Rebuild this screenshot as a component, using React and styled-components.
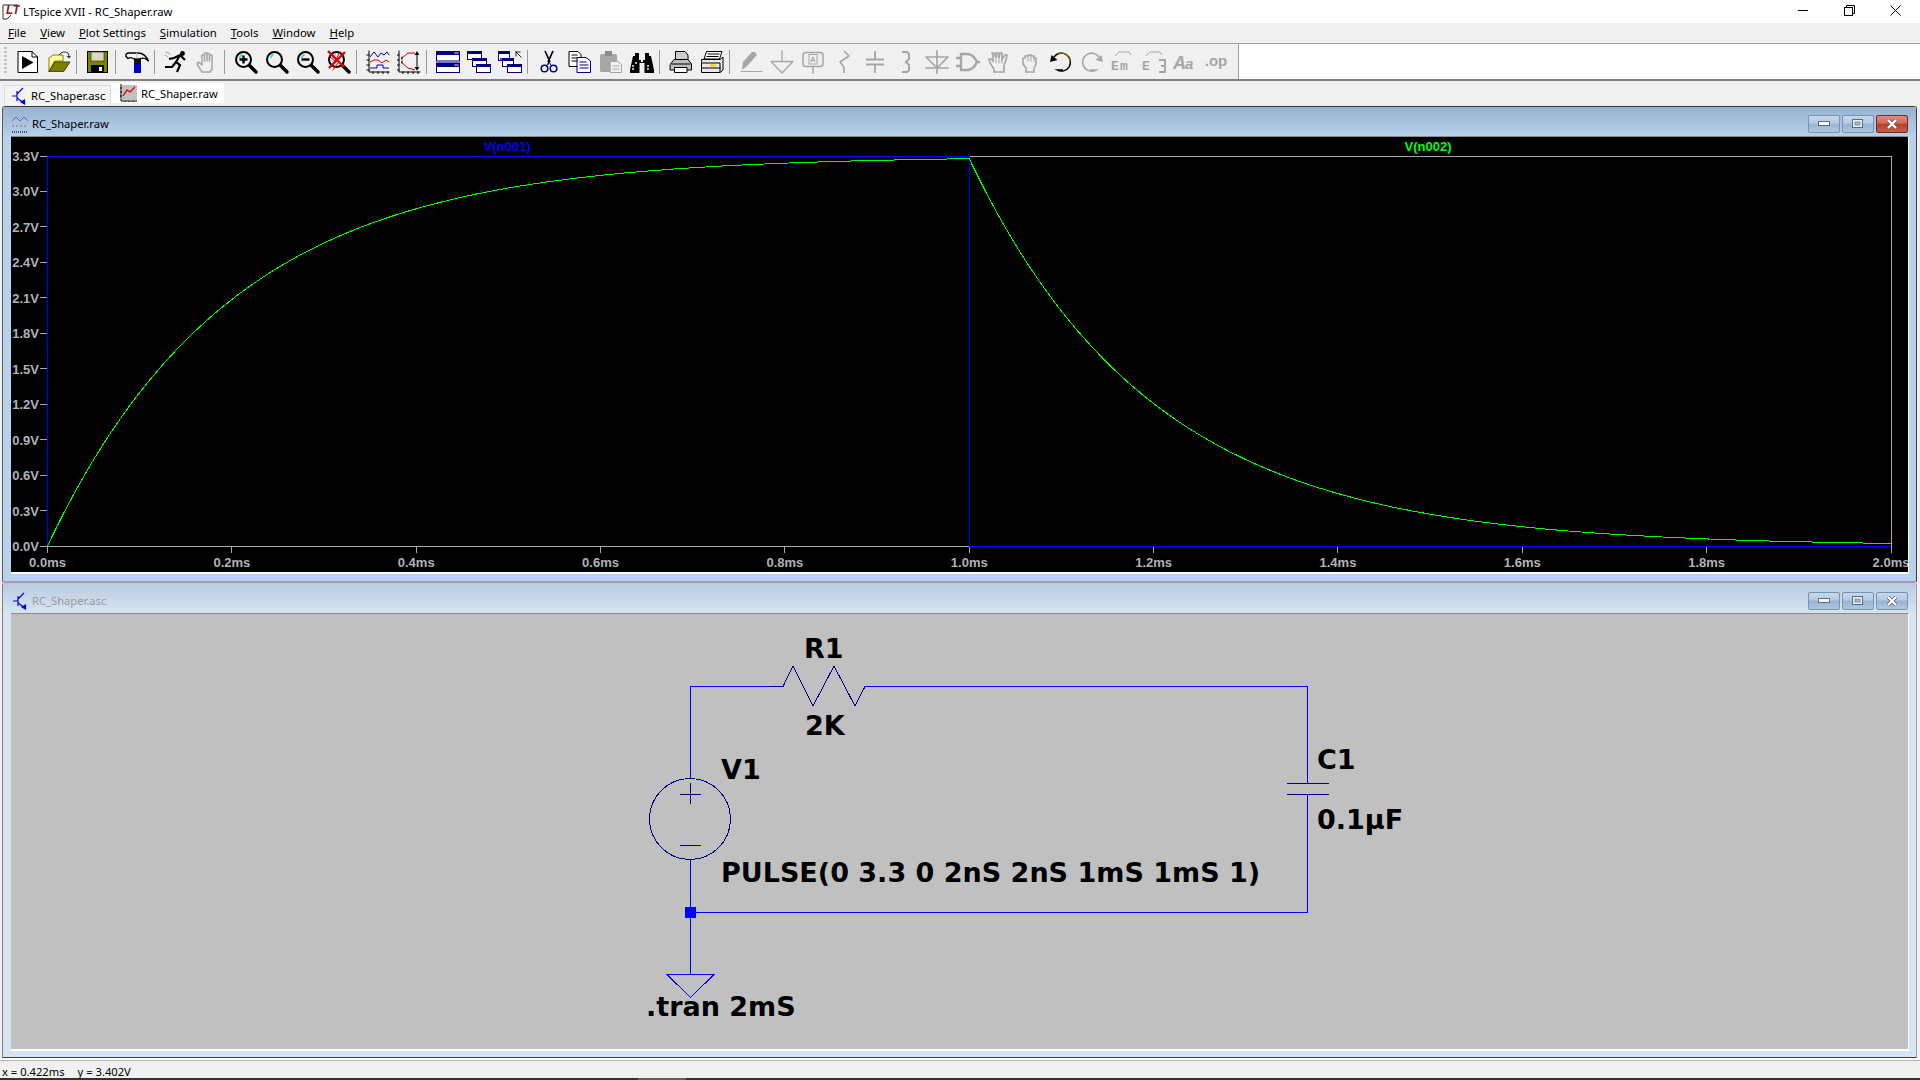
import React from 'react';
import styled, { createGlobalStyle } from 'styled-components';

const GlobalStyle = createGlobalStyle`
  html, body { margin: 0; padding: 0; overflow: hidden; background: #f0f0f0; }
  * { box-sizing: border-box; }
`;

const UI_FONT = '"Liberation Sans", Arial, sans-serif';
const G = '#a6a6a6';
const NAVY = '#000080';

const Root = styled.div`
  width: 1920px; height: 1080px; display: flex; flex-direction: column; overflow: hidden;
  background: #f0f0f0; font-family: "Noto Sans", ${UI_FONT}; font-size: 11.2px; color: #000;
`;
const TitleBar = styled.div`
  height: 23px; background: #fff; display: flex; align-items: center; padding: 0 2px 0 2px; flex: none;
`;
const TitleText = styled.span`margin-left: 3px; font-size: 11.3px;`;
const WinControls = styled.div`margin-left: auto; display: flex; height: 100%;`;
const WinControl = styled.div`width: 46px; display: flex; align-items: center; justify-content: center; padding-bottom: 3px;`;
const MenuBar = styled.div`
  height: 21px; flex: none; background: #f0f0f0; border-bottom: 1px solid #a0a0a0;
  display: flex; align-items: center; gap: 14px; padding: 0 0 2px 8px; font-size: 11.35px;
`;
const MenuItem = styled.span`
  u { text-underline-offset: 1px; }
`;
const ToolRow = styled.div`display: flex; height: 37px; flex: none; background: #fff; border-bottom: 2px solid #808080;`;
const Toolbar = styled.div`
  width: 1239px; background: #f0f0f0; border-right: 1px solid #a0a0a0; display: flex; align-items: center;
  padding-left: 12px; position: relative;
`;
const Gripper = styled.div`
  position: absolute; left: 4px; top: 3px; bottom: 4px; width: 3px;
  background: repeating-linear-gradient(to bottom, #c4c4c4 0 2px, transparent 2px 4px);
`;
const ToolSlot = styled.div`width: 31px; height: 24px; flex: none; display: flex; justify-content: center; svg { display: block; }`;
const ToolSep = styled.div`width: 1px; height: 24px; margin: 0 5px 0 2px; background: #9a9a9a; flex: none;`;
const TabStrip = styled.div`height: 25px; flex: none; display: flex; padding-left: 4px; background: #f0f0f0; position: relative;`;
const Tab = styled.div`
  display: flex; align-items: center; gap: ${p => (p.$active ? 4 : 5)}px; font-size: 11.2px; height: 20px;
  margin-top: ${p => (p.$active ? 2 : 4)}px; width: ${p => (p.$active ? 113 : 107)}px;
  padding-left: ${p => (p.$active ? 8 : 7)}px; padding-bottom: ${p => (p.$active ? 1 : 0)}px;
  background: ${p => (p.$active ? '#fff' : '#f3f3f3')};
  border: 1px solid ${p => (p.$active ? '#fff' : '#dcdcdc')};
  border-bottom: none;
`;
const Mdi = styled.div`display: flex; flex-direction: column; margin: 0 3px 0 2px; flex: none;`;
const Window = styled.div`
  height: 476px; display: flex; flex-direction: column; flex: none; border-radius: 3px 3px 0 0;
  background: ${p => (p.$active ? '#b9d1ea' : '#d7e4f2')};
  border-style: solid; border-width: 1px;
  border-color: ${p => (p.$active ? '#3c3c3c #3c3c3c #35c8e6 #5a5a5a' : '#a0a0a0 #a0a0a0 #444 #808080')};
`;
const WindowTitle = styled.div`
  height: ${p => (p.$active ? 29 : 30)}px; flex: none; display: flex; align-items: center;
  padding: ${p => (p.$active ? 4 : 5)}px 8px 0 8px; gap: 4px; font-size: 11.2px;
  color: ${p => (p.$active ? '#000' : '#9a9a9a')};
  background: ${p => (p.$active ? 'linear-gradient(#98b1cf, #b7d0ea)' : 'linear-gradient(#b9cbde, #d6e4f2)')};
`;
const TitleIcon = styled.span`width: 17px; height: 18px; display: flex; justify-content: center; flex: none;`;
const WindowButtons = styled.div`margin-left: auto; display: flex; gap: 2px;`;
const WindowButton = styled.div`
  width: 32px; height: 18px; border-radius: 2px; display: flex; align-items: center; justify-content: center;
  border: 1px solid ${p => (p.$close ? '#6a2a30' : '#7c90ac')};
  background: ${p => (p.$close
    ? 'linear-gradient(#e08a7c 0, #d06a58 45%, #b83c28 50%, #c8604a 100%)'
    : 'linear-gradient(#c4d8ee 0, #b4cbe4 45%, #98b3d0 50%, #acc8e4 100%)')};
`;
const PlotFrame = styled.div`
  margin: 0 7px 7px 8px; flex: 1; border-top: 1px solid #8a8a8a; border-right: 1px solid #fff; border-bottom: 2px solid #fff;
  svg { display: block; }
`;
const CanvasFrame = styled.div`
  margin: 0 7px 6px 8px; flex: 1; border-top: 1px solid #8a8a8a; border-right: 1px solid #fff; border-bottom: 2px solid #fff;
  svg { display: block; }
`;
const Gap = styled.div`height: 2px; flex: none; background: #fafafa;`;
const StatusBar = styled.div`
  height: 18px; flex: none; border-top: 1px solid #b4b4b4; background: #f0f0f0; display: flex; align-items: center;
  padding: 3px 0 0 2px; font-size: 11.2px; gap: 13px; white-space: pre;
`;
const Sliver = styled.div`
  height: 2px; flex: none; background: linear-gradient(to right, #333 638px, #5c5c5c 638px, #5c5c5c 686px, #333 686px);
`;
const PlotSvg = styled.svg`
  background: #000;
  text { font-family: ${UI_FONT}; font-weight: 700; font-size: 13px; fill: #b0b2b6; }
`;
const TraceLabel = styled.text`
  && { fill: ${p => p.$color}; }
`;
const SchematicSvg = styled.svg`
  background: #c0c0c0;
  text { font-family: "DejaVu Sans", ${UI_FONT}; font-weight: 700; font-size: 27px; fill: #000; }
`;

const S = ({ children, ...p }) => (
  <svg width="24" height="24" viewBox="0 0 24 24" fill="none" strokeLinecap="square" {...p}>{children}</svg>
);
const Lens = ({ children }) => (
  <S>
    <path d="M15 15L22 22" stroke="#000" strokeWidth="3.4" strokeLinecap="round" />
    <circle cx="9.5" cy="9.5" r="7.5" fill="#f0f0f0" stroke="#000" strokeWidth="2" />
    <path d="M5.5 8Q6 5.5 8.5 4.5" stroke="#2fd6d6" strokeWidth="1.6" strokeLinecap="butt" />
    {children}
  </S>
);
const MiniWin = ({ x, y, w, h }) => (
  <g>
    <rect x={x + .5} y={y + .5} width={w} height={h} fill="#fff" stroke={NAVY} />
    <rect x={x} y={y} width={w + 1} height="3" fill={NAVY} />
  </g>
);
const GlowHand = ({ open }) => (
  <S>
    <path
      d={open
        ? 'M7 22V19L3 13 2 9 4 9 6 11V6L5 3H7L9 8V3H11L12 8 13 3H15L15 9 18 5H20L19 10 17 15 17 19V22Z'
        : 'M8 22V18L5 14V8H7V6H10V5H13V6H16V8H18V14L16 18V22Z'}
      fill="#f0f0f0" stroke={G} strokeWidth="1.6"
    />
    <path d={open ? 'M9 9V13M12 8V13M15 9V13' : 'M10 6V11M13 6V11M16 8V11'} stroke={G} />
  </S>
);
const IconLetter = ({ x, children }) => (
  <text x={x} y="20" fontSize="13" fontWeight="700" fontFamily="Liberation Mono" fill={G}>{children}</text>
);

const Icons = {
  run: <S><path d="M2.5 1.5H16L21.5 7V22.5H2.5Z" fill="#fff" stroke="#000" /><path d="M16 1.5V7H21.5" stroke="#000" /><path d="M6 6L17.5 12.5L6 19Z" fill="#000" /></S>,
  open: <S><path d="M2 21V8L6 5H16V11H8Z" fill="#ffff9a" stroke="#808000" /><path d="M2 21L8 12H23L17 21Z" fill="#808000" stroke="#404000" /><path d="M12 5Q16 0 21 3L22 6" stroke="#333" strokeLinecap="butt" /><path d="M19.5 6H24L22 8.5Z" fill="#333" /></S>,
  save: <S><rect x="1.5" y="1.5" width="20" height="21" fill="#808000" stroke="#000" /><rect x="5" y="2" width="13" height="9" fill="#d8d8c8" stroke="#404000" strokeWidth=".7"/><rect x="5" y="15" width="13" height="7" fill="#000" /><rect x="13" y="17" width="3" height="4" fill="#fff" /></S>,
  hammer: <S><path d="M.7 6Q1 3 4 3H13Q20 3 23.5 11L20 8.5Q17 7.5 15 9H9Q6 6.5 3 8.5Z" fill="#f4f4f4" stroke="#000" strokeWidth="1.3" strokeLinejoin="round" /><rect x="9" y="9" width="7" height="6" fill="#111" /><rect x="9" y="14" width="7" height="9" fill="#0000c8" /><path d="M12 3V8" stroke="#bbb" /></S>,
  run2: <S><circle cx="18.5" cy="3.5" r="2.4" fill="#000" /><path d="M5 9L10 8 16 5 12 12 16 15 13 22M12 12L8 17 1 17M16 5 21 10" stroke="#000" strokeWidth="2.2" strokeLinecap="butt" /><path d="M2 2L6 4M1 5L4 7" stroke="#a0a0a0" /></S>,
  hand: <S><path d="M7 22L2 14 3.5 12 7 15V5H9.5V11 3H12V11 3.5H14.5V11 5H17V15 19L15 22Z" fill="#f0f0f0" stroke={G} strokeWidth="1.5" strokeLinejoin="round" /></S>,
  zoomIn: <Lens><path d="M5.5 9.5H13.5M9.5 5.5V13.5" stroke="#000" strokeWidth="2.4" strokeLinecap="butt" /></Lens>,
  zoom: <Lens />,
  zoomOut: <Lens><path d="M5.5 9.5H13.5" stroke="#000" strokeWidth="2.4" strokeLinecap="butt" /></Lens>,
  zoomX: <Lens><path d="M1 1L17 17M18 2L2 18" stroke="#e00000" strokeWidth="2.4" strokeLinecap="butt" /><path d="M6 20L11 13M13 2L8 11 3 7" stroke="#e00000" /></Lens>,
  waves: <S><path d="M3 1V22H23" stroke="#000" /><path d="M1 5H3M1 10H3M1 15H3M1 20H3M7 22V24M12 22V24M17 22V24M22 22V24" stroke="#000" /><path d="M4 7L8 2 12 7 15 3 18 5 21 2 23 5" stroke="#0000c8" strokeLinecap="butt" /><path d="M4 12L8 10H12L16 13 20 10 23 12" stroke="#e00000" strokeLinecap="butt" /><path d="M4 18H11V15H17V18H23" stroke="#0000c8" strokeLinecap="butt" /></S>,
  fft: <S><path d="M2 1V22H23" stroke="#000" /><path d="M0 5H2M0 10H2M0 15H2M0 20H2M6 22V24M11 22V24M16 22V24M21 22V24" stroke="#000" /><path d="M4 9L11 3H18M4 12L11 18 18 20" stroke="#d00000" strokeLinecap="butt" /><path d="M20 2V19" stroke="#000" /><path d="M17.5 5L20 1.5 22.5 5ZM17.5 17L20 20.5 22.5 17Z" fill="#000" /><path d="M5 7V15" stroke="#000" strokeDasharray="2 2" /></S>,
  tile: <S><rect x=".5" y="1.5" width="23" height="9.5" fill="#fff" stroke={NAVY} /><rect x="0" y="1" width="24" height="4" fill={NAVY} /><rect x=".5" y="13" width="23" height="9.5" fill="#fff" stroke={NAVY} /><rect x="0" y="13" width="24" height="4" fill={NAVY} /><path d="M19 3H20M21 3H22M19 15H20M21 15H22" stroke="#fff" /></S>,
  cascade: <S><MiniWin x={0} y={1} w={14} h={8} /><MiniWin x={5} y={8} w={14} h={8} /><MiniWin x={9} y={14} w={14} h={8} /></S>,
  arrange: <S><MiniWin x={0} y={1} w={11} h={9} /><MiniWin x={4} y={8} w={11} h={8} /><MiniWin x={9} y={14} w={14} h={8} /><path d="M18 2H22M18 2V6M18 2L23 7" stroke="#222" /><rect x="2" y="8" width="2" height="2" fill="#d000d0" /></S>,
  cut: <S><path d="M8 1L13 12M16 1L11 12" stroke="#000" strokeWidth="1.7" strokeLinecap="butt" /><path d="M11.5 11V14" stroke="#000" /><circle cx="7.5" cy="18.5" r="3.3" stroke={NAVY} strokeWidth="1.5" /><circle cx="16.5" cy="18.5" r="3.3" stroke={NAVY} strokeWidth="1.5" /><path d="M10 15L12 12 14 15" stroke={NAVY} /></S>,
  copy: <S><path d="M1.5 1.5H10L13 4.5V16.5H1.5Z" fill="#fff" stroke="#000" /><path d="M4 5H9M4 8H10M4 11H10" stroke="#000" /><path d="M9.5 7.5H18L22.5 11V22.5H9.5Z" fill="#fff" stroke={NAVY} /><path d="M12 12H18M12 15H20M12 18H20" stroke={NAVY} /></S>,
  paste: <S><rect x="1" y="4" width="17" height="18" rx="1.5" fill={G} /><rect x="6" y="1" width="7" height="5" fill="#8a8a8a" /><path d="M11.5 11.5H19L22.5 14.5V22.5H11.5Z" fill="#f0f0f0" stroke={G} /><path d="M14 16H20M14 19H20" stroke={G} /></S>,
  binoc: <S><path d="M3 6H9V10H15V6H21L24 20V23H14.5V13H9.5V23H0V20Z" fill="#000" /><path d="M5 3H9V6H5ZM15 3H19V6H15Z" fill="#000" /><path d="M3 15V20M6 12V14M18 15V20" stroke="#fff" strokeWidth="1.4" strokeLinecap="butt" strokeDasharray="2 1" /><path d="M11 10H13V12H11Z" fill="#fff" /></S>,
  print: <S><path d="M7 1.5H16L19 5V11H7Z" fill="#ccc" stroke="#000" /><path d="M1.5 14L5 9.5H19L22.5 14V20H1.5Z" fill="#bdbdbd" stroke="#000" /><path d="M6 17.5H18V22.5H6Z" fill="#fff" stroke="#000" /><path d="M3 14H21" stroke="#000" /></S>,
  printer: <S><path d="M7 1.5H22L19.5 9H4.5Z" fill="#fff" stroke="#000" /><path d="M8 4H19M7 6.5H18" stroke="#000" /><path d="M2 9.5H20L23 7V20L20 22.5H1.5V12Z" fill="#e8e8e8" stroke="#000" /><path d="M2 13H20V22M2 18H20" stroke="#000" /><rect x="10" y="14.5" width="6" height="2" fill="#f0d000" /></S>,
  pencil: <S><path d="M3 20L4 12 13 2H16L18 5 8 16Z" fill={G} /><path d="M2 21.5H23" stroke={G} /></S>,
  ground: <S><path d="M12 1V11M1 11.5H23L12 23Z" stroke={G} strokeWidth="1.3" strokeLinejoin="round" /></S>,
  label: <S><rect x="2" y="2.5" width="20" height="14" rx="3" stroke={G} strokeWidth="1.5" /><rect x="8" y="4.5" width="8" height="9.5" stroke={G} /><text x="12" y="12" textAnchor="middle" fontSize="8" fontWeight="700" fontFamily="Liberation Mono" fill={G}>A</text><path d="M12 17V23" stroke={G} strokeWidth="1.5" /></S>,
  res: <S><path d="M12 1L17 6 8 12 12 17 12 23" stroke={G} strokeWidth="1.7" strokeLinecap="butt" strokeLinejoin="bevel" /></S>,
  cap: <S><path d="M12 1V9M12 15V23M3 9.5H21M3 14.5H21" stroke={G} strokeWidth="1.8" strokeLinecap="butt" /></S>,
  ind: <S><path d="M8 2H13L15 4V9L12 12 15 15V20L13 22H8" stroke={G} strokeWidth="2" strokeLinecap="butt" /></S>,
  diode: <S><path d="M12 1V23M1 7H23L12 18ZM1 18H23" stroke={G} strokeWidth="1.7" strokeLinejoin="round" /></S>,
  gate: <S><path d="M5 4H12Q18 5 21 12 18 19 12 20H5ZM0 8H5M0 16H5M21 12H24" stroke={G} strokeWidth="2.4" strokeLinecap="butt" /></S>,
  handOpen: <GlowHand open />,
  handFist: <GlowHand />,
  undo: <S><path d="M5 7A9 9 0 1 1 8 20H14" stroke="#000" strokeWidth="1.4" strokeLinecap="butt" /><path d="M9 3.5A9 9 0 0 1 21 11" stroke="#807000" strokeWidth="1.4" strokeLinecap="butt" /><path d="M1 12L2.5 5 8.5 10Z" fill="#000" /></S>,
  redo: <S transform="scale(-1 1)"><path d="M5 7A9 9 0 1 1 8 20H14" stroke={G} strokeWidth="1.6" strokeLinecap="butt" /><path d="M1 12L2.5 5 8.5 10Z" fill={G} /></S>,
  moveEm: <S><path d="M4 6L8 2H18L20 5" stroke={G} strokeLinecap="butt" /><IconLetter x={0}>E</IconLetter><IconLetter x={9}>m</IconLetter></S>,
  dragE: <S><path d="M4 6L8 2H18L20 5" stroke={G} strokeLinecap="butt" /><IconLetter x={0}>E</IconLetter><path d="M17 10H23V22H17M19 16H23" stroke={G} strokeWidth="1.8" strokeLinecap="butt" /></S>,
  text: <S><text x="0" y="19" fontSize="18" fontStyle="italic" fontWeight="700" fontFamily="Liberation Sans" fill={G}>A</text><text x="12" y="19" fontSize="15" fontStyle="italic" fontWeight="700" fontFamily="Liberation Sans" fill={G}>a</text></S>,
  op: <S><text x="12" y="16" textAnchor="middle" fontSize="15" fontWeight="700" fontFamily="Liberation Sans" fill={G}>.op</text></S>,
};

const GROUPS = [
  ['run', 'open'], ['save'], ['hammer'], ['run2', 'hand'],
  ['zoomIn', 'zoom', 'zoomOut', 'zoomX'], ['waves', 'fft'], ['tile', 'cascade', 'arrange'],
  ['cut', 'copy', 'paste', 'binoc'], ['print', 'printer'],
  ['pencil', 'ground', 'label', 'res', 'cap', 'ind', 'diode', 'gate', 'handOpen', 'handFist', 'undo', 'redo', 'moveEm', 'dragE', 'text', 'op'],
];

const MENUS = ['File', 'View', 'Plot Settings', 'Simulation', 'Tools', 'Window', 'Help'];

const AppLogo = () => (
  <svg width="18" height="18" viewBox="0 0 18 18" fill="none">
    <path d="M1 2L1 16L5 16L9 12" stroke="#333" strokeWidth="1" />
    <path d="M1 2H16" stroke="#333" />
    <text x="4" y="11" fontSize="12" fontWeight="700" fontStyle="italic" fontFamily="Liberation Sans" fill="#8a1c1c">LT</text>
  </svg>
);
const TransistorIcon = () => (
  <svg width="14" height="18" viewBox="0 0 14 18" fill="none" stroke="#0000e0" strokeWidth="1.2">
    <path d="M0 9H5M5 4V14M11 1L5 7M5 11L12 16" /><path d="M9 15L12.5 17V13Z" fill="#0000e0" />
  </svg>
);
const PlotIconColor = () => (
  <svg width="17" height="18" viewBox="0 0 17 18" fill="none">
    <rect x="2" y="1" width="15" height="15" fill="#c0c0c0" />
    <path d="M1 0V17H17" stroke="#000" /><path d="M3 12L7 6 10 8 15 3" stroke="#e00000" strokeWidth="1.3" />
    <path d="M0 4H2M0 8H2M0 12H2M5 17V18M9 17V18M13 17V18" stroke="#000" />
  </svg>
);
const PlotIconMuted = () => (
  <svg width="17" height="18" viewBox="0 0 17 18" fill="none">
    <path d="M1 17H17" stroke="#555" strokeDasharray="1 1" strokeWidth="2" />
    <path d="M1 6L5 2 9 6 13 2 17 6" stroke="#5070a0" /><path d="M1 11H17" stroke="#b06060" strokeDasharray="2 2" />
  </svg>
);
const MinGlyph = () => <svg width="12" height="6"><rect x=".5" y=".5" width="11" height="4" fill="#fff" stroke="#5a6a80" /></svg>;
const MaxGlyph = () => <svg width="12" height="10"><rect x=".5" y=".5" width="10" height="8" fill="#e8eef5" stroke="#5a6a80" /><rect x="3" y="3" width="5" height="3" fill="#a8bcd4" stroke="#5a6a80" strokeWidth=".6" /></svg>;
const CloseGlyph = () => <svg width="12" height="10"><path d="M2 1L10 9M10 1L2 9" stroke="#5a5a5a" strokeWidth="3.6" /><path d="M2 1L10 9M10 1L2 9" stroke="#fff" strokeWidth="2.2" /></svg>;

const WindowChrome = ({ active, icon, title, children }) => (
  <Window $active={active}>
    <WindowTitle $active={active}>
      <TitleIcon>{icon}</TitleIcon><span>{title}</span>
      <WindowButtons>
        <WindowButton><MinGlyph /></WindowButton>
        <WindowButton><MaxGlyph /></WindowButton>
        <WindowButton $close={active}><CloseGlyph /></WindowButton>
      </WindowButtons>
    </WindowTitle>
    {children}
  </Window>
);

const X0 = 47.5, X1 = 1891, Y0 = 546, Y33 = 156;
const xOf = t => X0 + (X1 - X0) * t / 2;
const yOf = v => Y0 - (Y0 - Y33) * v / 3.3;
const greenPoints = (() => {
  const pts = [];
  const peak = 3.3 * (1 - Math.exp(-5));
  for (let t = 0; t <= 2.0001; t += 0.002) {
    const v = t <= 1 ? 3.3 * (1 - Math.exp(-t / 0.2)) : peak * Math.exp(-(t - 1) / 0.2);
    pts.push(`${xOf(t).toFixed(1)},${yOf(v).toFixed(1)}`);
  }
  return pts.join(' ');
})();

const Plot = () => (
  <PlotSvg width="1897" height="435" viewBox="11 137 1897 435">
    <g shapeRendering="crispEdges">
      <rect x={X0} y={Y33} width={X1 - X0} height={Y0 - Y33} fill="none" stroke="#a8a8a8" />
      {Array.from({ length: 12 }, (_, i) => <line key={i} x1="40" x2={X0} y1={yOf(i * 0.3)} y2={yOf(i * 0.3)} stroke="#a8a8a8" />)}
      {Array.from({ length: 11 }, (_, i) => <line key={i} x1={xOf(i * 0.2)} x2={xOf(i * 0.2)} y1={Y0} y2={Y0 + 7} stroke="#a8a8a8" />)}
      <polyline points={`${X0},${Y0} ${X0},${Y33} ${xOf(1)},${Y33} ${xOf(1)},${Y0} ${X1},${Y0}`} fill="none" stroke="#0000ff" />
      <polyline points={greenPoints} fill="none" stroke="#00ff00" />
    </g>
    {Array.from({ length: 12 }, (_, i) => <text key={i} x="39" y={yOf(i * 0.3) + 5} textAnchor="end">{(i * 0.3).toFixed(1)}V</text>)}
    {Array.from({ length: 11 }, (_, i) => <text key={i} x={xOf(i * 0.2)} y="567" textAnchor="middle">{(i * 0.2).toFixed(1)}ms</text>)}
    <TraceLabel x="507" y="151" textAnchor="middle" $color="#0000ff">V(n001)</TraceLabel>
    <TraceLabel x="1428" y="151" textAnchor="middle" $color="#00ff00">V(n002)</TraceLabel>
  </PlotSvg>
);

const Schematic = () => (
  <SchematicSvg width="1897" height="435" viewBox="11 614 1897 435">
    <g shapeRendering="crispEdges" fill="none">
      <path d="M773 686.5H690.5V778M690.5 860V974M690.5 912.5H1307.5V794M1307.5 783V686.5H865" stroke="#0000ff" />
      <path d="M773 686.5H783L793 666 813 706 834 666 855 706 865 686.5" stroke={NAVY} />
      <path d="M1287 783.5H1329M1287 794.5H1329" stroke={NAVY} />
      <circle cx="690" cy="819" r="40.5" stroke={NAVY} />
      <path d="M680 794.5H701M690.5 783V804M680 845.5H701" stroke={NAVY} />
      <path d="M667 974.5H714L690.5 997.5Z" stroke="#0000ff" />
      <rect x="685" y="907" width="11" height="11" fill="#0000ff" />
    </g>
    <text x="804" y="658">R1</text>
    <text x="805" y="735">2K</text>
    <text x="721" y="779">V1</text>
    <text x="1317" y="769">C1</text>
    <text x="1317" y="829">0.1µF</text>
    <text x="721" y="882">PULSE(0 3.3 0 2nS 2nS 1mS 1mS 1)</text>
    <text x="646" y="1016">.tran 2mS</text>
  </SchematicSvg>
);

export default function App() {
  return (
    <Root>
      <GlobalStyle />
      <TitleBar>
        <AppLogo />
        <TitleText>LTspice XVII - RC_Shaper.raw</TitleText>
        <WinControls>
          <WinControl><svg width="11" height="11"><path d="M0 5.5H10" stroke="#000" /></svg></WinControl>
          <WinControl><svg width="11" height="11" fill="none" stroke="#000"><rect x=".5" y="2.5" width="8" height="8" /><path d="M2.5 2.5V.5H10.5V8.5H8.5" /></svg></WinControl>
          <WinControl><svg width="11" height="11" stroke="#000"><path d="M.5 .5L10.5 10.5M10.5 .5L.5 10.5" /></svg></WinControl>
        </WinControls>
      </TitleBar>
      <MenuBar>
        {MENUS.map(m => <MenuItem key={m}><u>{m[0]}</u>{m.slice(1)}</MenuItem>)}
      </MenuBar>
      <ToolRow>
        <Toolbar>
          <Gripper />
          {GROUPS.map((g, i) => (
            <React.Fragment key={i}>
              {i > 0 && <ToolSep />}
              {g.map(n => <ToolSlot key={n}>{Icons[n]}</ToolSlot>)}
            </React.Fragment>
          ))}
        </Toolbar>
      </ToolRow>
      <TabStrip>
        <Tab><TransistorIcon />RC_Shaper.asc</Tab>
        <Tab $active><PlotIconColor />RC_Shaper.raw</Tab>
      </TabStrip>
      <Mdi>
        <WindowChrome active icon={<PlotIconMuted />} title="RC_Shaper.raw">
          <PlotFrame><Plot /></PlotFrame>
        </WindowChrome>
        <WindowChrome icon={<TransistorIcon />} title="RC_Shaper.asc">
          <CanvasFrame><Schematic /></CanvasFrame>
        </WindowChrome>
      </Mdi>
      <Gap />
      <StatusBar><span>x = 0.422ms</span><span>y = 3.402V</span></StatusBar>
      <Sliver />
    </Root>
  );
}
